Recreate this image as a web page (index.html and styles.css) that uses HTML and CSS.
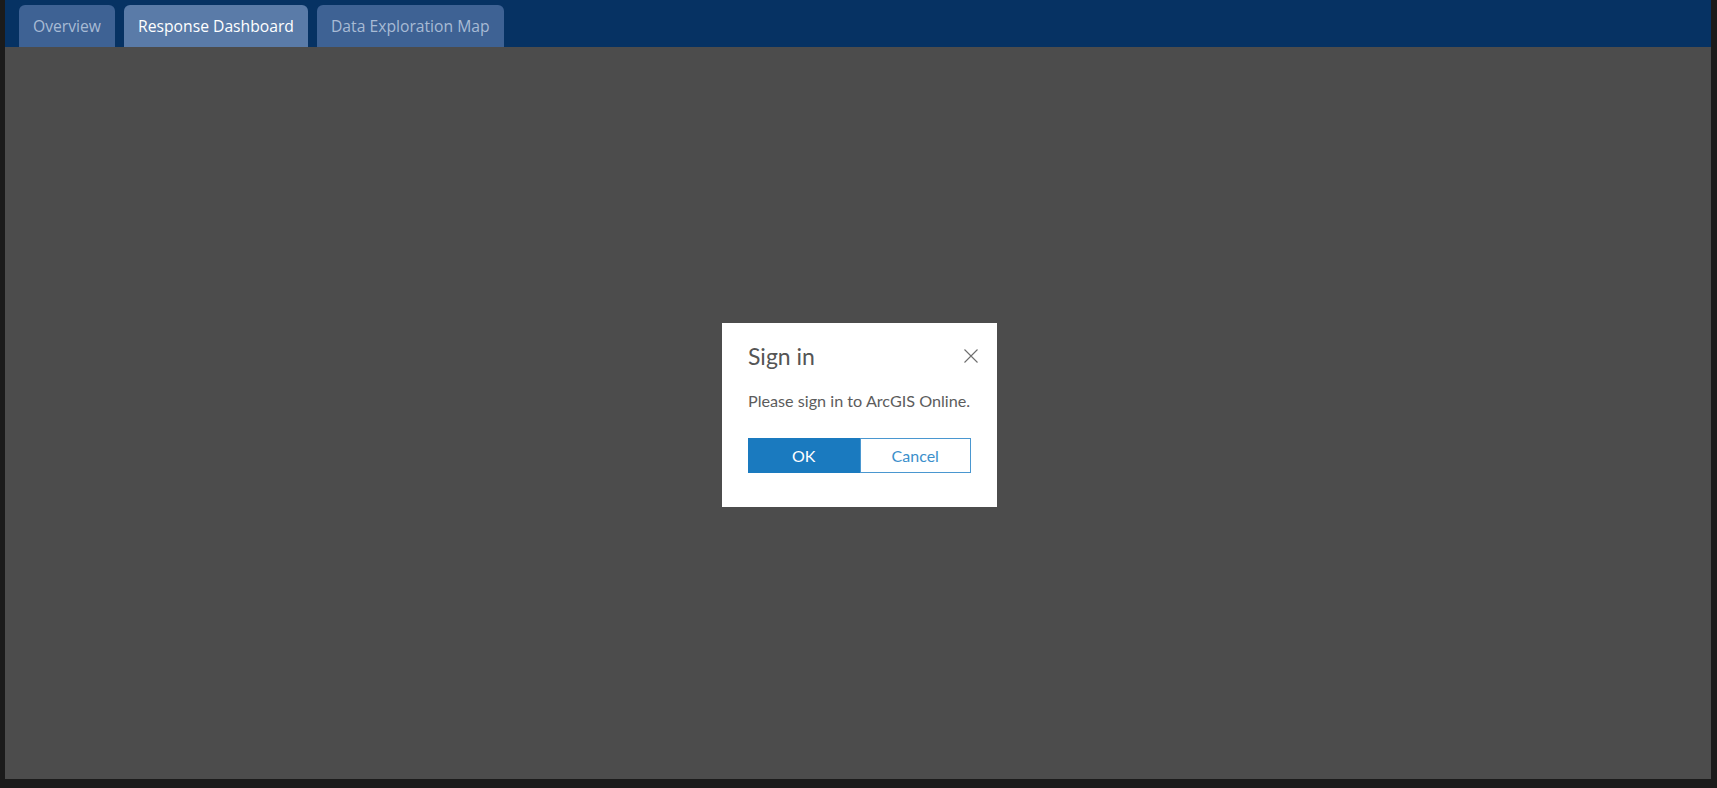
FILE: index.html
```html
<!DOCTYPE html>
<html lang="en">
<head>
    <meta charset="UTF-8">
    <meta name="viewport" content="width=device-width, initial-scale=1.0">
    <title>Response Dashboard</title>
    <link rel="stylesheet" href="styles.css">
</head>
<body>
    <div class="frame">
        <div class="tab-bar">
            <div class="tab">Overview</div>
            <div class="tab active">Response Dashboard</div>
            <div class="tab">Data Exploration Map</div>
        </div>

        <div class="content">
            <div class="dialog">
                <div class="dialog-header">
                    <h2 class="dialog-title">Sign in</h2>
                    <button class="close-btn" aria-label="Close">
                        <svg width="14" height="14" viewBox="0 0 14 14">
                            <path d="M0.5 0.5 L13.5 13.5 M13.5 0.5 L0.5 13.5" stroke="#6e6e6e" stroke-width="1.1" fill="none"/>
                        </svg>
                    </button>
                </div>
                <p class="dialog-text">Please sign in to ArcGIS Online.</p>
                <div class="btn-group">
                    <button class="btn btn-primary">OK</button>
                    <button class="btn btn-secondary">Cancel</button>
                </div>
            </div>
        </div>
    </div>
</body>
</html>
```

FILE: styles.css
```css
html, body {
    height: 100%;
}
body {
    margin: 0;
    background-color: #1b1b1b;
    font-family: 'Open Sans', sans-serif;
}
.frame {
    height: 100%;
    box-sizing: border-box;
    padding: 0 6px 9px 5px;
    display: flex;
    flex-direction: column;
}
.tab-bar {
    height: 47px;
    box-sizing: border-box;
    background-color: #063263;
    padding: 5px 0 0 14px;
    display: flex;
    gap: 9px;
}
.tab {
    background-color: #3e6294;
    color: #a8bbd5;
    font-size: 15.7px;
    padding: 0 14px;
    border-radius: 6px 6px 0 0;
    display: flex;
    align-items: center;
}
.tab.active {
    background-color: #5a7ba8;
    color: #ffffff;
}
.content {
    flex: 1;
    background-color: #4c4c4c;
    display: flex;
    align-items: center;
    justify-content: center;
}
.dialog {
    width: 275px;
    box-sizing: border-box;
    background-color: #ffffff;
    padding: 19px 26px 34px 26px;
    margin: 3px 0 0 3px;
}
.dialog-header {
    display: flex;
    justify-content: space-between;
    align-items: center;
}
.dialog-title {
    margin: 0;
    font-family: Lato, 'Open Sans', sans-serif;
    font-weight: 400;
    font-size: 23px;
    line-height: 28px;
    color: #555555;
}
.close-btn {
    background: none;
    border: none;
    padding: 0;
    margin-right: -7px;
    display: flex;
    cursor: pointer;
}
.dialog-text {
    margin: 20px 0 26px;
    font-family: Lato, 'Open Sans', sans-serif;
    font-size: 16.2px;
    line-height: 22px;
    color: #5c5c5c;
    white-space: nowrap;
}
.btn-group {
    display: flex;
}
.btn {
    flex: 1;
    height: 35px;
    font-family: Lato, 'Open Sans', sans-serif;
    font-size: 16px;
    border: 1px solid #4a97d0;
    cursor: pointer;
}
.btn-primary {
    background-color: #1a7abf;
    border-color: #1a7abf;
    color: #ffffff;
}
.btn-secondary {
    background-color: #ffffff;
    color: #3b8fcb;
}
```
